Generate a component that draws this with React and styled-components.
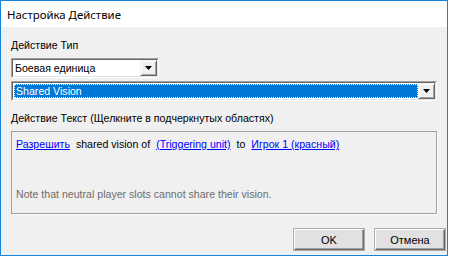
import React from "react";
import styled, { createGlobalStyle } from "styled-components";

const Global = createGlobalStyle`
  html, body { margin: 0; padding: 0; background: #ffffff; }
  * { box-sizing: border-box; }
`;

const Window = styled.div`
  width: 448px;
  height: 256px;
  border: 1px solid #1883d7;
  display: flex;
  flex-direction: column;
  background: #f0f0f0;
  font-family: "Liberation Sans", Arial, sans-serif;
  font-size: 10.6px;
  color: #000;
`;

const TitleBar = styled.div`
  height: 26px;
  background: #ffffff;
  display: flex;
  align-items: center;
  padding-left: 6px;
  font-family: "Noto Sans", "Open Sans", sans-serif;
  font-size: 11.4px;
  color: #000;
`;

const Body = styled.div`
  flex: 1;
  display: flex;
  flex-direction: column;
  align-items: flex-start;
  padding: 12px 2px 0 10px;
`;

const Label = styled.div`
  height: 13px;
  line-height: 13px;
  white-space: nowrap;
  margin-top: ${(p) => p.$mt || 0}px;
`;

const Combo = styled.div`
  width: ${(p) => p.$w}px;
  height: 20px;
  margin-top: ${(p) => p.$mt || 0}px;
  display: flex;
  align-items: stretch;
  border-style: solid;
  border-width: 1px;
  border-color: #a0a0a0 #ffffff #ffffff #a0a0a0;
`;

const ComboInner = styled.div`
  flex: 1;
  display: flex;
  border-style: solid;
  border-width: 1px;
  border-color: #696969 #e3e3e3 #e3e3e3 #696969;
  background: #ffffff;
  min-width: 0;
`;

const ComboText = styled.div`
  flex: 1;
  display: flex;
  align-items: center;
  padding-left: 2px;
  white-space: nowrap;
  background: ${(p) => (p.$selected ? "#0078d7" : "#ffffff")};
  color: ${(p) => (p.$selected ? "#ffffff" : "#000000")};
  margin: ${(p) => (p.$selected ? "1px 0 1px 1px" : "0")};
  outline: ${(p) => (p.$selected ? "1px dotted #ffffff" : "none")};
  outline-offset: -1px;
`;

const DropButton = styled.div`
  width: 17px;
  display: flex;
  align-items: center;
  justify-content: center;
  background: #f0f0f0;
  border-style: solid;
  border-width: 1px;
  border-color: #f0f0f0 #696969 #696969 #f0f0f0;
  box-shadow: inset 1px 1px 0 #ffffff, inset -1px -1px 0 #a0a0a0;
`;

const Arrow = () => (
  <svg width="7" height="4" viewBox="0 0 7 4">
    <polygon points="0,0 7,0 3.5,4" fill="#000" />
  </svg>
);

const GroupBox = styled.div`
  width: 426px;
  height: 83px;
  margin-top: 6px;
  border: 1px solid #a0a0a0;
  box-shadow: 1px 1px 0 #ffffff;
  display: flex;
  flex-direction: column;
  padding: 6px 0 0 4px;
`;

const LinkLine = styled.div`
  display: flex;
  align-items: center;
  gap: 6px;
  height: 13px;
  line-height: 13px;
  white-space: nowrap;
`;

const Link = styled.span`
  color: #0000ff;
  text-decoration: underline;
  text-underline-offset: 1px;
`;

const Note = styled.div`
  margin-top: 37px;
  height: 13px;
  line-height: 13px;
  color: #6d6d6d;
  white-space: nowrap;
`;

const ButtonRow = styled.div`
  align-self: stretch;
  display: flex;
  justify-content: flex-end;
  gap: 11px;
  margin-top: 15px;
`;

const Button = styled.div`
  width: 70px;
  height: 21px;
  display: flex;
  align-items: center;
  justify-content: center;
  background: #e1e1e1;
  border-style: solid;
  border-width: 1px;
  border-color: #ffffff #696969 #696969 #ffffff;
  box-shadow: inset -1px -1px 0 #a0a0a0;
  outline: 1px solid #adadad;
  font-size: 11px;
  color: #000;
`;

export default function App() {
  return (
    <>
      <Global />
      <Window>
        <TitleBar>Настройка Действие</TitleBar>
        <Body>
          <Label>Действие Тип</Label>
          <Combo $w={148} $mt={6}>
            <ComboInner>
              <ComboText>Боевая единица</ComboText>
              <DropButton>
                <Arrow />
              </DropButton>
            </ComboInner>
          </Combo>
          <Combo $w={426} $mt={3}>
            <ComboInner>
              <ComboText $selected>Shared Vision</ComboText>
              <DropButton>
                <Arrow />
              </DropButton>
            </ComboInner>
          </Combo>
          <Label $mt={11}>Действие Текст (Щелкните в подчеркнутых областях)</Label>
          <GroupBox>
            <LinkLine>
              <Link>Разрешить</Link>
              <span>shared vision of</span>
              <Link>(Triggering unit)</Link>
              <span>to</span>
              <Link>Игрок 1 (красный)</Link>
            </LinkLine>
            <Note>Note that neutral player slots cannot share their vision.</Note>
          </GroupBox>
          <ButtonRow>
            <Button>OK</Button>
            <Button>Отмена</Button>
          </ButtonRow>
        </Body>
      </Window>
    </>
  );
}
